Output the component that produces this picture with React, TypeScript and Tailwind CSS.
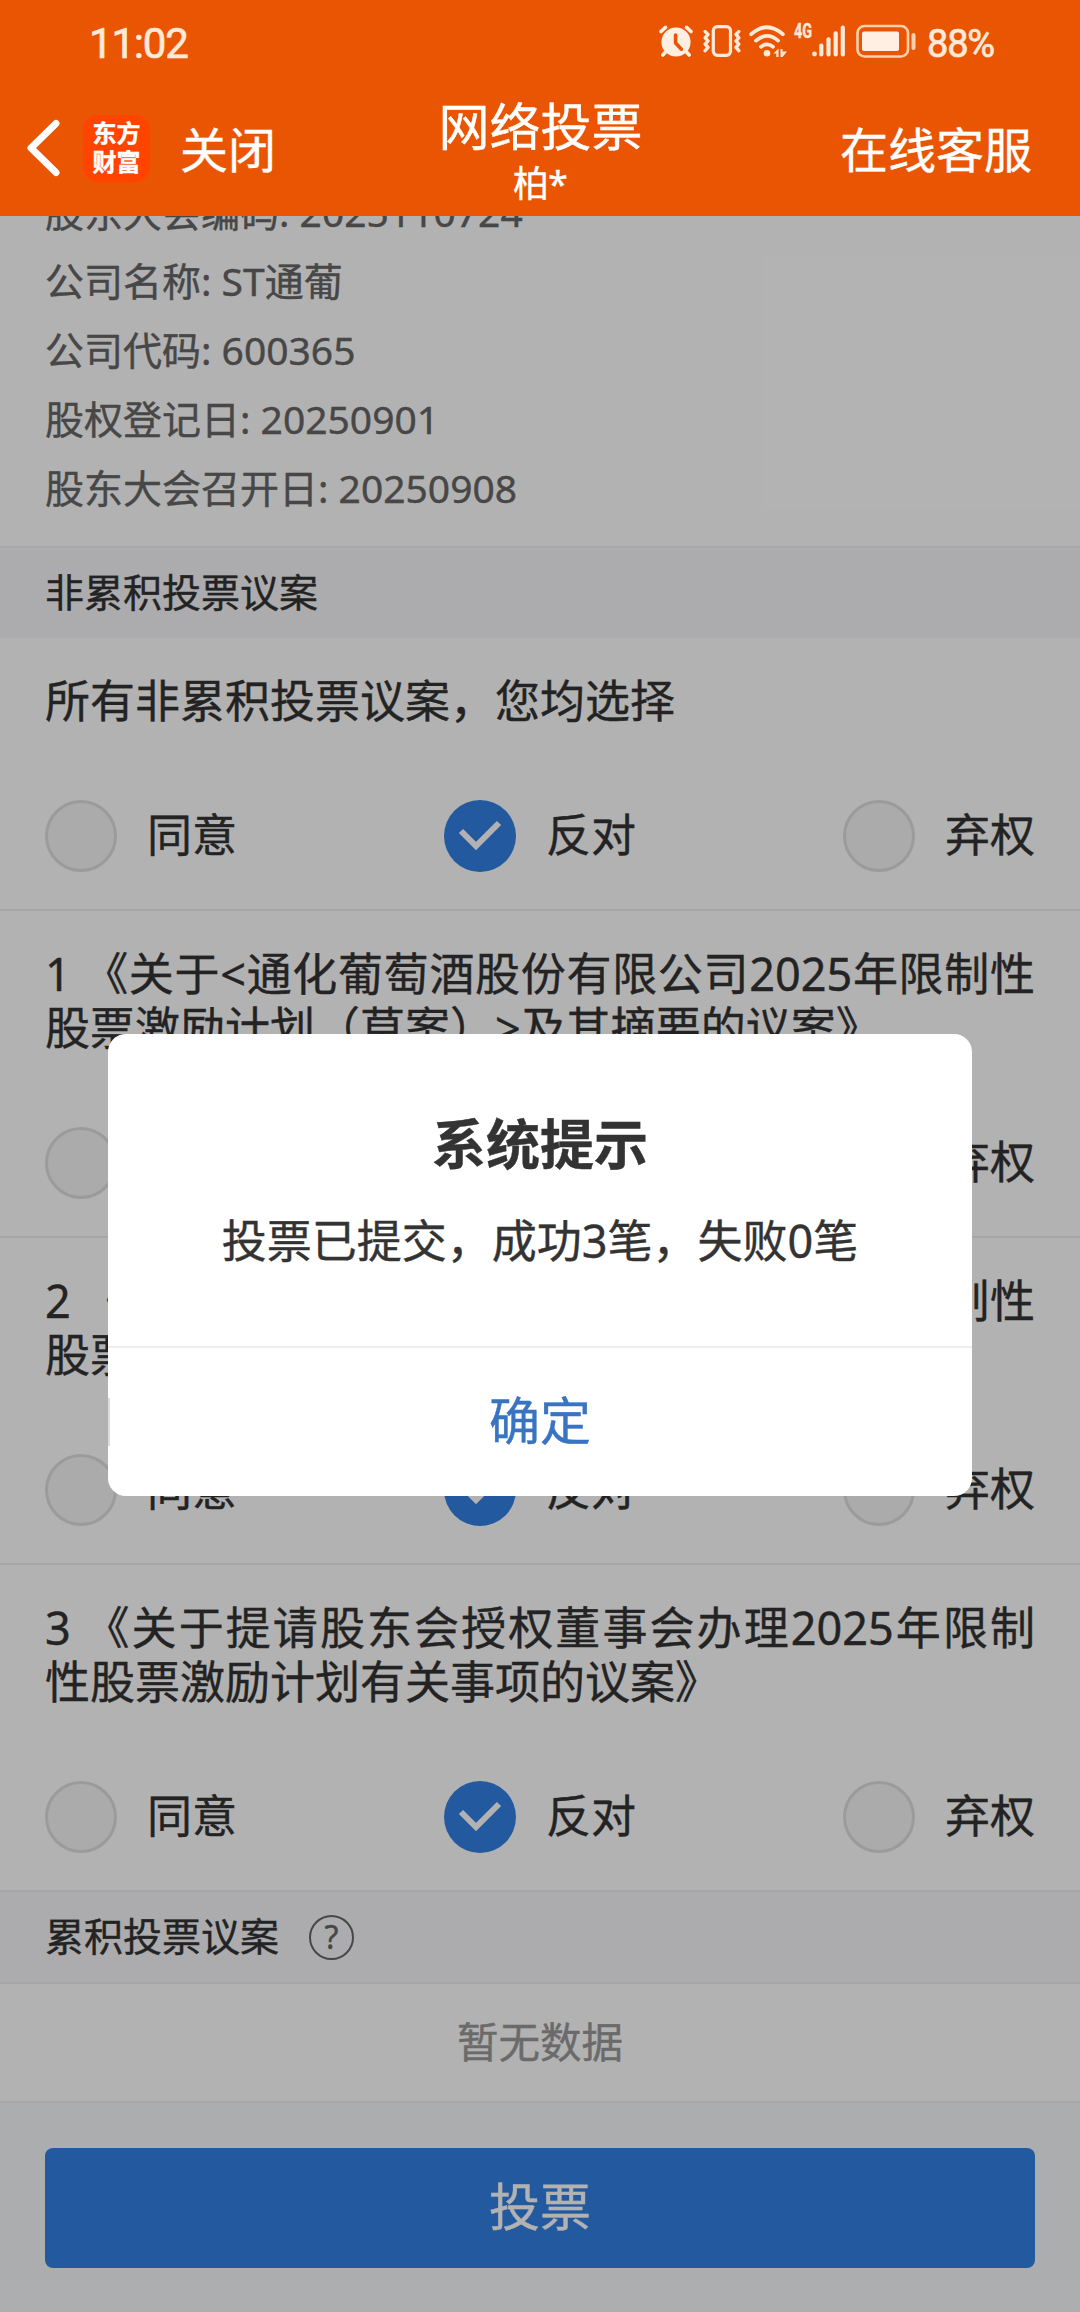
import clsx from "clsx";

type Choice = "同意" | "反对" | "弃权";

type Proposal = {
  title: string;
  choice: Choice;
};

const CHOICES: Choice[] = ["同意", "反对", "弃权"];

const MEETING_INFO = [
  { label: "股东大会编码", value: "2025110724" },
  { label: "公司名称", value: "ST通葡" },
  { label: "公司代码", value: "600365" },
  { label: "股权登记日", value: "20250901" },
  { label: "股东大会召开日", value: "20250908" },
];

const PROPOSALS: Proposal[] = [
  { title: "所有非累积投票议案，您均选择", choice: "反对" },
  {
    title: "1 《关于<通化葡萄酒股份有限公司2025年限制性股票激励计划（草案）>及其摘要的议案》",
    choice: "反对",
  },
  {
    title: "2 《关于<通化葡萄酒股份有限公司2025年限制性股票激励计划实施考核管理办法>的议案》",
    choice: "反对",
  },
  {
    title: "3 《关于提请股东会授权董事会办理2025年限制性股票激励计划有关事项的议案》",
    choice: "反对",
  },
];

function AlarmIcon() {
  return (
    <svg className="h-8 w-[34px]" viewBox="0 0 34 32" fill="none" aria-hidden>
      <circle cx="17" cy="17" r="14.6" fill="#ffeee2" />
      <path
        d="M2 6.5 6.5 2.4M32 6.5 27.5 2.4M6.5 27 3.8 30M27.5 27l2.7 3"
        stroke="#ffeee2"
        strokeWidth="3.6"
        strokeLinecap="round"
      />
      <path
        d="M16.6 10v8l5.8 6.2"
        stroke="#ea5504"
        strokeWidth="3.6"
        strokeLinecap="round"
        strokeLinejoin="round"
      />
    </svg>
  );
}

function VibrateIcon() {
  return (
    <svg className="h-8 w-[38px]" viewBox="0 0 38 32" fill="none" stroke="#ffe9d9" aria-hidden>
      <rect x="10.3" y="1.7" width="17.2" height="28.6" rx="4" strokeWidth="3.2" />
      <path
        d="M2.2 6.6 5 9.4 2.2 12.8 5 16 2.2 19.2 5 22.4 2.2 25.6M35.8 6.6 33 9.4l2.8 3.4L33 16l2.8 3.2-2.8 3.2 2.8 3.2"
        strokeWidth="3.4"
        strokeLinecap="round"
        strokeLinejoin="round"
      />
    </svg>
  );
}

function WifiIcon() {
  return (
    <svg className="h-8 w-[38px]" viewBox="0 0 38 32" fill="none" aria-hidden>
      <g stroke="#ffe9d9" strokeWidth="3.8" strokeLinecap="round">
        <path d="M2.2 9.2Q18 -4.8 33.8 9.2" />
        <path d="M7 15.6Q18 6.2 29 15.6" />
        <path d="M12 21.8Q18 17 24 21.8" />
      </g>
      <circle cx="18" cy="28.2" r="3.3" fill="#ffe9d9" />
      <path
        d="M24.5 28.5 29.5 23.5V32H27.3V28.5ZM31.5 24v8h2l4.5-5.5h-4.5V24Z"
        fill="#ffe9d9"
      />
    </svg>
  );
}

function SignalIcon() {
  return (
    <svg className="h-8 w-[34px]" viewBox="0 0 34 32" fill="#ffe9d9" aria-hidden>
      <circle cx="2.5" cy="29" r="2.4" />
      <rect x="7.2" y="18.5" width="4.2" height="13" rx="2" />
      <rect x="14.4" y="12.2" width="4.2" height="19.3" rx="2" />
      <rect x="21.6" y="6.2" width="4.2" height="25.3" rx="2" />
      <rect x="28.7" y="0.5" width="4.2" height="31" rx="2" />
    </svg>
  );
}

function BatteryIcon() {
  return (
    <svg className="h-[34px] w-[61px]" viewBox="0 0 61 34" fill="none" aria-hidden>
      <rect x="1.5" y="2" width="50.5" height="30.5" rx="7" stroke="#ffd0ae" strokeWidth="2.6" />
      <rect x="6" y="7.5" width="37" height="19.5" rx="2" fill="#ffeee2" />
      <rect x="55.5" y="9" width="4" height="17" rx="2" fill="#ffd0ae" />
    </svg>
  );
}

function StatusBar() {
  return (
    <div className="flex h-20 items-center justify-between pr-[86px] pl-[89px] font-['Roboto',sans-serif] text-[#ffe9d9]">
      <span className="pt-[7px] text-[42px] leading-none tracking-[-1.2px] [-webkit-text-stroke:0.7px]">
        11:02
      </span>
      <div className="flex items-center pt-[2px]">
        <AlarmIcon />
        <span className="ml-[10px] flex">
          <VibrateIcon />
        </span>
        <span className="ml-2 flex">
          <WifiIcon />
        </span>
        <span className="ml-[7px] inline-block w-[18px] origin-left scale-x-[0.72] self-start pt-[3px] text-[20px] leading-[16px] font-bold">
          4G
        </span>
        <SignalIcon />
        <span className="ml-[10px] flex">
          <BatteryIcon />
        </span>
        <span className="ml-[10px] pt-[5px] text-[38px] leading-none tracking-[-1.2px] [-webkit-text-stroke:0.7px]">
          88%
        </span>
      </div>
    </div>
  );
}

function NavBar() {
  return (
    <div className="grid h-[136px] grid-cols-3 text-white">
      <div className="flex items-center pl-[26px]">
        <svg className="h-[58px] w-[34px]" viewBox="0 0 34 58" fill="none" aria-hidden>
          <path
            d="M30 4.5 5 29l25 24.5"
            stroke="#fff"
            strokeWidth="7"
            strokeLinecap="round"
            strokeLinejoin="round"
          />
        </svg>
        <div className="ml-[23px] flex size-[67px] flex-col items-center justify-center rounded-[15px] bg-[#ff4400] pb-[2px] text-[24px] leading-[29px] font-bold">
          <span>东方</span>
          <span>财富</span>
        </div>
        <span className="ml-[30px] pt-[3px] text-[48px] leading-none whitespace-nowrap">关闭</span>
      </div>
      <div className="flex flex-col items-center pt-[16px]">
        <h1 className="pl-[1px] text-[51px] leading-[60px]">网络投票</h1>
        <p className="pt-[1px] text-[36px] leading-[54px] tracking-[-1px]">柏*</p>
      </div>
      <div className="flex items-center justify-end pt-[3px] pr-[48px] text-[48px] leading-none">
        在线客服
      </div>
    </div>
  );
}

function Radio({ label, checked }: { label: Choice; checked: boolean }) {
  return (
    <div className="flex items-center gap-[30px]">
      <span
        className={clsx(
          "flex size-[72px] items-center justify-center rounded-full",
          checked ? "bg-[#3380e3]" : "border-3 border-[#dedede] bg-[#f5f5f5]",
        )}
      >
        {checked ? (
          <svg className="h-[32px] w-[44px]" viewBox="0 0 44 32" fill="none" aria-hidden>
            <path d="M3 11 18 26 41 3" stroke="#fff" strokeWidth="6" />
          </svg>
        ) : null}
      </span>
      <span className="pb-[3px] text-[45px] leading-none">{label}</span>
    </div>
  );
}

function ProposalItem({ title, choice }: Proposal) {
  return (
    <section className="border-b-2 border-[#eee] px-[45px] pt-[36px] pb-[37px]">
      <p className="text-justify text-[45px] leading-[54px]">{title}</p>
      <div className="mt-[72px] flex justify-between">
        {CHOICES.map((c) => (
          <Radio key={c} label={c} checked={c === choice} />
        ))}
      </div>
    </section>
  );
}

function ResultDialog() {
  return (
    <div className="absolute inset-x-0 top-[216px] bottom-0 flex items-center justify-center bg-black/30 pt-px">
      <div className="flex h-[462px] w-[864px] flex-col overflow-hidden rounded-[18px] bg-white text-center text-[#333]">
        <div className="h-[312px] pt-[75px]">
          <h2 className="text-[54px] leading-[70px] font-bold">系统提示</h2>
          <p className="mt-[32px] text-[45px] leading-[60px]">投票已提交，成功3笔，失败0笔</p>
        </div>
        <div className="flex flex-1 items-center border-t-2 border-[#eee]">
          <span className="h-12 w-[2px] bg-[#ddd]" />
          <button className="flex-1 pr-[2px] pb-[2px] text-[51px] leading-none text-[#3874c0]">
            确定
          </button>
        </div>
      </div>
    </div>
  );
}

export default function App() {
  return (
    <div
      lang="zh-CN"
      className="relative flex h-[2312px] w-[1080px] flex-col overflow-hidden bg-white font-['Noto_Sans','Noto_Sans_CJK_SC',sans-serif] text-[#333] [text-spacing-trim:space-all] [-webkit-text-stroke:0.4px]"
    >
      <header className="h-[216px] shrink-0 bg-[#ea5504]">
        <StatusBar />
        <NavBar />
      </header>

      <main className="min-h-0 flex-1 overflow-hidden">
        <div className="-mt-[39px] px-[45px] pb-[24px] text-[39px] leading-[69px] text-[#666]">
          {MEETING_INFO.map((row) => (
            <p key={row.label}>
              {row.label}: {row.value}
            </p>
          ))}
        </div>

        <div className="flex h-[92px] items-center border-t-2 border-[#edeff2] bg-[#f6f7fa] px-[45px] pb-[2px] text-[39px]">
          非累积投票议案
        </div>
        {PROPOSALS.map((p) => (
          <ProposalItem key={p.title} {...p} />
        ))}

        <div className="flex h-[92px] items-center gap-[30px] border-b-2 border-[#edeff2] bg-[#f6f7fa] px-[45px] text-[39px]">
          <span className="pb-[2px]">累积投票议案</span>
          <span className="flex size-[45px] items-center justify-center rounded-full border-2 border-[#666] pb-px text-[32px] leading-none text-[#666]">
            ?
          </span>
        </div>
        <div className="flex h-[119px] items-center justify-center border-b-2 border-[#eee] text-[41.5px] text-[#999]">
          暂无数据
        </div>

        <div className="h-[209px] bg-[#f7f8fa] px-[45px] pt-[45px]">
          <button className="h-[120px] w-full rounded-lg bg-[#3380e3] pb-[4px] text-[51px] leading-none text-white">
            投票
          </button>
        </div>
      </main>

      <ResultDialog />
    </div>
  );
}
